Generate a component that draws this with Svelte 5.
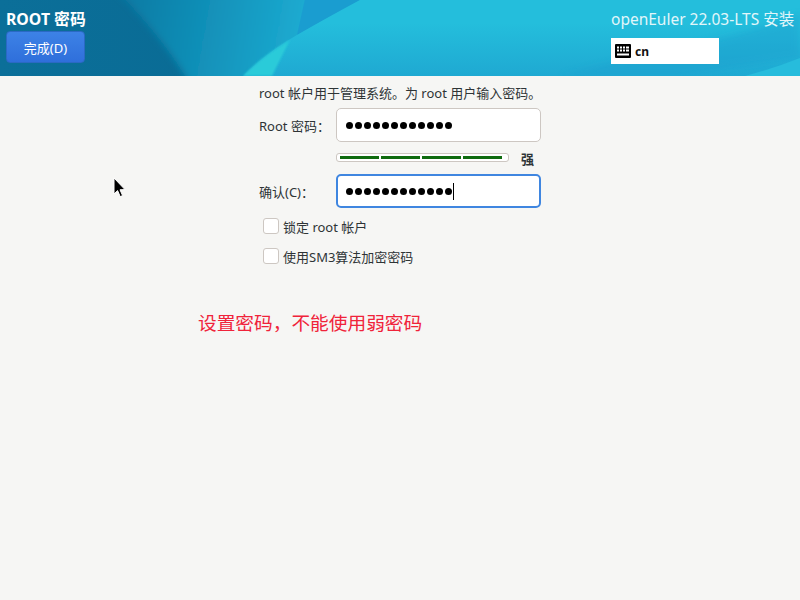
<script lang="ts">
  const dots = Array(12).fill(0);
  const segments = [0, 1, 2, 3];
  const checks = ['锁定 root 帐户', '使用SM3算法加密密码'];
</script>

<div class="page">
  <header class="top">
    <svg class="art" viewBox="0 0 800 76" preserveAspectRatio="none" aria-hidden="true">
      <defs>
        <linearGradient id="left" x1="0" y1="0" x2="1" y2="0">
          <stop offset="0" stop-color="#0b6f99" />
          <stop offset="0.55" stop-color="#086891" />
          <stop offset="1" stop-color="#0b7aa3" />
        </linearGradient>
        <linearGradient id="mid" gradientUnits="userSpaceOnUse" x1="130" y1="0" x2="300" y2="30">
          <stop offset="0" stop-color="#0c7ca5" />
          <stop offset="0.5" stop-color="#1292ba" />
          <stop offset="1" stop-color="#1caad0" />
        </linearGradient>
        <linearGradient id="right" x1="0" y1="0" x2="0" y2="1">
          <stop offset="0.3" stop-color="#24bedc" />
          <stop offset="1" stop-color="#1fa9d2" />
        </linearGradient>
        <filter id="soft" x="-10%" y="-10%" width="120%" height="120%">
          <feGaussianBlur stdDeviation="3.5" />
        </filter>
        <filter id="softer" x="-10%" y="-30%" width="120%" height="160%">
          <feGaussianBlur stdDeviation="1" />
        </filter>
      </defs>
      <rect width="800" height="76" fill="url(#left)" />
      <path d="M118 -8 L420 -8 L420 84 L190 84 Q165 40 118 -8Z" fill="url(#mid)" filter="url(#soft)" />
      <path d="M305 -1 L297 35 L362 -1Z" fill="#1a9dd0" />
      <path d="M243 76 Q270 50 297 35 Q330 16 360 0 L800 0 L800 76Z" fill="url(#right)" />
      <path d="M243 76 Q262 56 290 40 Q280 60 272 76Z" fill="#2acbd9" filter="url(#softer)" />
      <path d="M660 52 Q740 36 800 14 L800 58 Q740 66 680 76 L560 76 Q610 62 660 52Z" fill="#1a9ccd" opacity="0.4" filter="url(#soft)" />
      <path d="M745 76 Q775 68 800 58 L800 76Z" fill="#27bcdc" />
    </svg>
    <div class="spoke">
      <div class="title">ROOT 密码</div>
      <button class="done">完成(D)</button>
    </div>
    <div class="product">
      <div class="name">openEuler 22.03-LTS 安装</div>
      <div class="layout">
        <svg width="16" height="14" viewBox="0 0 16 14" aria-hidden="true">
          <rect width="16" height="14" rx="1" fill="#000" />
          <g fill="#fff">
            <rect x="2" y="2.5" width="2" height="2" /><rect x="5" y="2.5" width="2" height="2" />
            <rect x="8" y="2.5" width="2" height="2" /><rect x="11" y="2.5" width="3" height="2" />
            <rect x="2" y="5.5" width="2" height="2" /><rect x="5" y="5.5" width="2" height="2" />
            <rect x="8" y="5.5" width="2" height="2" /><rect x="11" y="5.5" width="3" height="2" />
            <rect x="2" y="9.5" width="12" height="2" />
          </g>
        </svg>
        <span>cn</span>
      </div>
    </div>
  </header>

  <main class="content">
    <div class="form">
      <p class="intro">root 帐户用于管理系统。为 root 用户输入密码。</p>
      <div class="grid">
        <span class="label">Root 密码：</span>
        <div class="entry">
          {#each dots as _}<i class="dot"></i>{/each}
        </div>
        <div class="strength">
          <div class="meter">
            {#each segments as s (s)}<i></i>{/each}
          </div>
          <b>强</b>
        </div>
        <span class="label">确认(C)：</span>
        <div class="entry focus">
          {#each dots as _}<i class="dot"></i>{/each}
          <i class="caret"></i>
        </div>
      </div>
      <div class="checks">
        {#each checks as c}
          <div class="check"><i class="box"></i><span>{c}</span></div>
        {/each}
      </div>
    </div>
    <p class="note">设置密码，不能使用弱密码</p>
  </main>

  <svg class="pointer" width="14" height="22" viewBox="0 0 14 22" aria-hidden="true">
    <path d="M1 1 L1 17 L4.6 13.6 L7.2 19.6 L9.6 18.6 L7 12.8 L12 12.6 Z" fill="#000" stroke="#fff" stroke-width="1" />
  </svg>
</div>

<style>
  :global(body) {
    margin: 0;
    background: #f6f6f4;
  }
  .page {
    position: relative;
    width: 800px;
    height: 600px;
    overflow: hidden;
    background: #f6f6f4;
    font-family: "Noto Sans", "Noto Sans CJK SC", sans-serif;
    color: #2e3436;
    font-size: 13px;
  }
  .top {
    position: relative;
    height: 76px;
    display: flex;
    justify-content: space-between;
    color: #fff;
  }
  .art {
    position: absolute;
    inset: 0;
    width: 100%;
    height: 100%;
  }
  .spoke, .product {
    position: relative;
  }
  .spoke {
    padding: 9px 0 0 6px;
  }
  .title {
    font-size: 15.8px;
    font-weight: 700;
    line-height: 21px;
    white-space: nowrap;
  }
  .done {
    display: block;
    width: 79px;
    height: 32px;
    margin-top: 1px;
    padding: 0;
    border: 1px solid #2a69c4;
    border-radius: 4px;
    background: linear-gradient(#3d82e6, #2f6fdb);
    color: #fff;
    font: inherit;
    font-size: 13px;
  }
  .product {
    width: 189px;
    padding-top: 9px;
  }
  .name {
    font-size: 15.5px;
    line-height: 21px;
    white-space: nowrap;
    color: #e2f6fa;
  }
  .layout {
    display: flex;
    align-items: center;
    gap: 4px;
    width: 104px;
    height: 26px;
    margin-top: 8px;
    padding-left: 4px;
    background: #fff;
    color: #111;
    font-weight: 700;
    font-size: 12px;
  }
  .form {
    width: 290px;
    margin-left: 259px;
    padding-top: 8px;
  }
  .intro {
    margin: 0;
    height: 24px;
    line-height: 18px;
    white-space: nowrap;
    font-size: 13px;
  }
  .grid {
    display: grid;
    grid-template-columns: 77px 205px;
    align-items: center;
  }
  .label {
    white-space: nowrap;
  }
  .entry {
    box-sizing: border-box;
    height: 34px;
    display: flex;
    align-items: center;
    gap: 2px;
    padding-left: 9px;
    border: 1px solid #cdc7c2;
    border-radius: 5px;
    background: #fff;
  }
  .entry.focus {
    border: 2px solid #3f86e0;
    padding-left: 8px;
  }
  .dot {
    width: 7px;
    height: 7px;
    border-radius: 50%;
    background: #000;
  }
  .caret {
    width: 1px;
    height: 17px;
    margin-left: -1px;
    background: #000;
  }
  .strength {
    grid-column: 2;
    display: flex;
    align-items: center;
    height: 32px;
    margin-right: -6px;
    gap: 12px;
  }
  .meter {
    box-sizing: border-box;
    width: 173px;
    height: 9px;
    margin-bottom: 1px;
    display: flex;
    align-items: center;
    gap: 2px;
    padding: 0 6px 0 3px;
    border: 1px solid #cdc7c2;
    border-radius: 3px;
    background: #fff;
  }
  .meter i {
    flex: 1;
    height: 3px;
    background: #0f6b0f;
  }
  .strength b {
    font-size: 13px;
  }
  .checks {
    display: flex;
    flex-direction: column;
    gap: 14px;
    margin: 10px 0 0 4px;
  }
  .check {
    display: flex;
    align-items: center;
    gap: 4px;
    height: 16px;
    white-space: nowrap;
  }
  .box {
    box-sizing: border-box;
    width: 16px;
    height: 16px;
    border: 1px solid #cdc7c2;
    border-radius: 3px;
    background: #fff;
  }
  .note {
    margin: 46px 0 0 198px;
    color: #f0233a;
    font-size: 18.7px;
    line-height: 26px;
    white-space: nowrap;
  }
  .pointer {
    position: absolute;
    left: 113px;
    top: 177px;
  }
</style>
